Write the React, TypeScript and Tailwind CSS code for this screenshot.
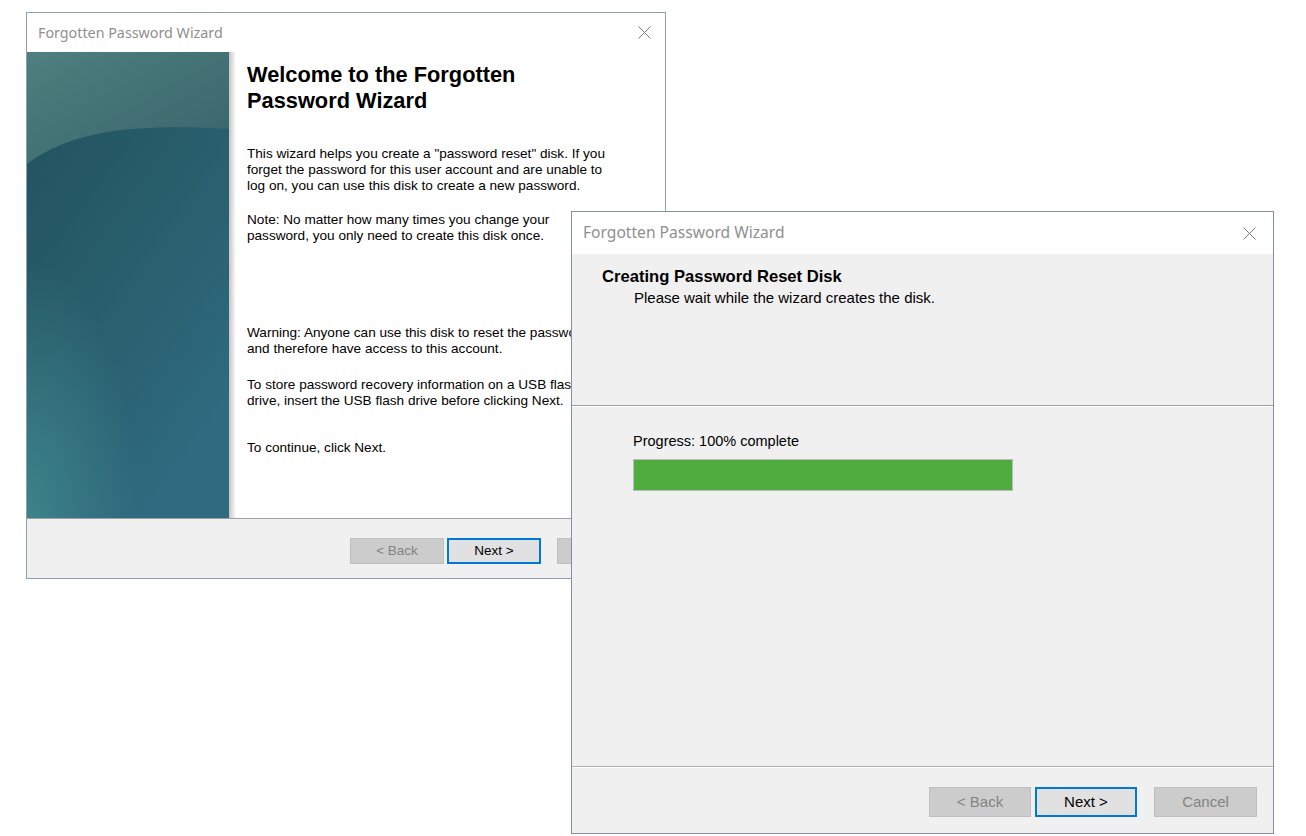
import React from "react";

const CloseIcon = () => (
  <svg width="13" height="13" viewBox="0 0 13 13" className="block">
    <path d="M0.5 0.5 L12.5 12.5 M12.5 0.5 L0.5 12.5" stroke="#7a7a7a" strokeWidth="1" fill="none" />
  </svg>
);

const SideArt = () => (
  <svg width="202" height="466" viewBox="0 0 202 466" className="block shrink-0">
    <defs>
      <linearGradient id="base" x1="0" y1="0" x2="0.6" y2="1">
        <stop offset="0" stopColor="#214f5c" />
        <stop offset="0.5" stopColor="#285d6a" />
        <stop offset="1" stopColor="#2f6a80" />
      </linearGradient>
      <radialGradient id="glow" cx="0" cy="1" r="0.55">
        <stop offset="0" stopColor="#3f878c" stopOpacity="0.9" />
        <stop offset="1" stopColor="#3f878c" stopOpacity="0" />
      </radialGradient>
      <linearGradient id="cap" x1="0" y1="0" x2="1" y2="1">
        <stop offset="0" stopColor="#4f7f7e" />
        <stop offset="1" stopColor="#37646c" />
      </linearGradient>
    </defs>
    <rect width="202" height="466" fill="url(#base)" />
    <rect width="202" height="466" fill="url(#glow)" />
    <path d="M0 0 H202 V77 C160 74 110 75 80 80 C45 86 18 98 0 112 Z" fill="url(#cap)" />
  </svg>
);

type BtnProps = { label: string; primary?: boolean; w: string; h: string; size: string };

const WizButton = ({ label, primary, w, h, size }: BtnProps) => (
  <div
    className={
      primary
        ? `${w} ${h} ${size} flex items-center justify-center border-2 border-[#0078d7] bg-[#e1e1e1] text-black`
        : `${w} ${h} ${size} flex items-center justify-center border border-[#bfbfbf] bg-[#cccccc] text-[#838383]`
    }
  >
    {label}
  </div>
);

const App = () => {
  return (
    <div className="relative h-[836px] w-[1306px] overflow-hidden bg-white font-['Liberation_Sans',Arial,sans-serif] text-black">
      {/* first wizard page */}
      <div className="absolute left-[26px] top-[12px] flex h-[567px] w-[640px] flex-col border border-[#8d9db3] bg-white">
        <div className="flex h-[39px] items-center justify-between pl-[11px] pr-[14px]">
          <span className="font-['Noto_Sans',sans-serif] text-[14.3px] text-[#8f8f8f]">Forgotten Password Wizard</span>
          <CloseIcon />
        </div>
        <div className="flex h-[466px]">
          <SideArt />
          <div className="w-[7px] bg-gradient-to-r from-[#c4c4c4] to-white" />
          <div className="flex flex-col pl-[11px] pt-[10px] text-[13.6px] leading-[16px]">
            <h1 className="text-[21.8px] font-bold leading-[26px]">
              Welcome to the Forgotten
              <br />
              Password Wizard
            </h1>
            <p className="mt-[32px]">
              This wizard helps you create a "password reset" disk. If you
              <br />
              forget the password for this user account and are unable to
              <br />
              log on, you can use this disk to create a new password.
            </p>
            <p className="mt-[18px]">
              Note: No matter how many times you change your
              <br />
              password, you only need to create this disk once.
            </p>
            <p className="mt-[81px] whitespace-nowrap">
              Warning: Anyone can use this disk to reset the password
              <br />
              and therefore have access to this account.
            </p>
            <p className="mt-[20px] whitespace-nowrap">
              To store password recovery information on a USB flash
              <br />
              drive, insert the USB flash drive before clicking Next.
            </p>
            <p className="mt-[31px]">To continue, click Next.</p>
          </div>
        </div>
        <div className="flex flex-1 items-start justify-end border-t border-[#a0a0a0] bg-[#f0f0f0] pr-[14px] pt-[19px]">
          <WizButton label="< Back" w="w-[94px]" h="h-[26px]" size="text-[13.5px]" />
          <div className="w-[3px]" />
          <WizButton label="Next >" primary w="w-[94px]" h="h-[26px]" size="text-[13.5px]" />
          <div className="w-[16px]" />
          <WizButton label="Cancel" w="w-[94px]" h="h-[26px]" size="text-[13.5px]" />
        </div>
      </div>

      {/* second wizard page */}
      <div className="absolute left-[571px] top-[211px] flex h-[623px] w-[703px] flex-col border border-[#7f90a8] bg-[#f0f0f0]">
        <div className="flex h-[42px] items-center justify-between bg-white pl-[11px] pr-[17px]">
          <span className="font-['Noto_Sans',sans-serif] text-[15.6px] text-[#8f8f8f]">Forgotten Password Wizard</span>
          <CloseIcon />
        </div>
        <div className="h-[151px] pl-[30px] pt-[14px]">
          <div className="text-[16.6px] font-bold leading-[18px]">Creating Password Reset Disk</div>
          <div className="mt-[3px] pl-[32px] text-[15px] leading-[18px]">Please wait while the wizard creates the disk.</div>
        </div>
        <div className="h-[2px] border-t border-b border-t-[#a0a0a0] border-b-white" />
        <div className="h-[359px] pl-[61px] pt-[25px]">
          <div className="text-[14.5px] leading-[18px]">Progress: 100% complete</div>
          <div className="mt-[9px] h-[32px] w-[380px] border border-[#bcbcbc] bg-[#4fac3e]" />
        </div>
        <div className="h-[2px] border-t border-b border-t-[#b0b0b0] border-b-white" />
        <div className="flex flex-1 items-start justify-end pr-[16px] pt-[19px]">
          <WizButton label="< Back" w="w-[102px]" h="h-[30px]" size="text-[15px]" />
          <div className="w-[4px]" />
          <WizButton label="Next >" primary w="w-[102px]" h="h-[30px]" size="text-[15px]" />
          <div className="w-[17px]" />
          <WizButton label="Cancel" w="w-[103px]" h="h-[30px]" size="text-[15px]" />
        </div>
      </div>
    </div>
  );
};

export default App;
